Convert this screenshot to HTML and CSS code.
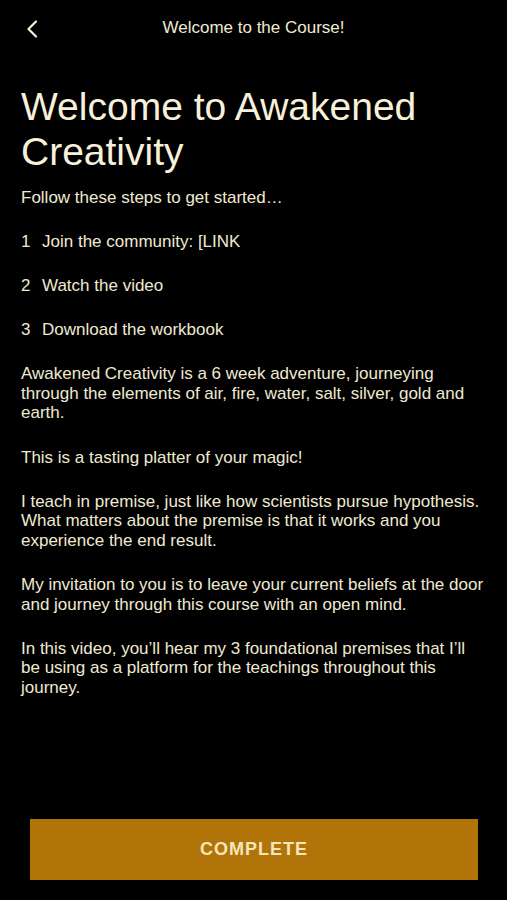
FILE: index.html
```html
<!DOCTYPE html>
<html lang="en">
<head>
<meta charset="utf-8">
<title>Welcome to the Course!</title>
<link rel="stylesheet" href="styles.css">
</head>
<body>
<div class="screen">
  <header class="topbar">
    <button class="back" aria-label="Back">
      <svg width="12" height="18" viewBox="0 0 12 18"><path d="M10 1.5 L2.5 9 L10 16.5" fill="none" stroke="#f4eed6" stroke-width="2.2" stroke-linecap="round" stroke-linejoin="round"/></svg>
    </button>
    <div class="topbar-title">Welcome to the Course!</div>
  </header>
  <main class="content">
    <h1 class="title">Welcome to Awakened Creativity</h1>
    <p class="para">Follow these steps to get started…</p>
    <ol class="steps">
      <li class="step"><span class="num">1</span><span>Join the community: [LINK</span></li>
      <li class="step"><span class="num">2</span><span>Watch the video</span></li>
      <li class="step"><span class="num">3</span><span>Download the workbook</span></li>
    </ol>
    <p class="para">Awakened Creativity is a 6 week adventure, journeying through the elements of air, fire, water, salt, silver, gold and earth.</p>
    <p class="para">This is a tasting platter of your magic!</p>
    <p class="para">I teach in premise, just like how scientists pursue hypothesis. What matters about the premise is that it works and you experience the end result.</p>
    <p class="para">My invitation to you is to leave your current beliefs at the door and journey through this course with an open mind.</p>
    <p class="para">In this video, you’ll hear my 3 foundational premises that I’ll be using as a platform for the teachings throughout this journey.</p>
  </main>
  <footer class="footer">
    <button class="complete">COMPLETE</button>
  </footer>
</div>
</body>
</html>
```
FILE: styles.css
```css
html, body {
  margin: 0;
  padding: 0;
  background: #000;
}
body {
  font-family: "Liberation Sans", Arial, sans-serif;
  color: #efe9d2;
}
.screen {
  height: 900px;
  display: flex;
  flex-direction: column;
}
.topbar {
  height: 56px;
  display: flex;
  align-items: center;
  justify-content: center;
  position: relative;
}
.back {
  position: absolute;
  left: 22px;
  top: 19px;
  padding: 0;
  margin: 0;
  border: 0;
  background: none;
  width: 20px;
  height: 20px;
  display: flex;
  align-items: center;
  justify-content: center;
}
.topbar-title {
  font-size: 17px;
  color: #efe9d2;
}
.content {
  flex: 1;
  padding: 28px 20px 0 21px;
}
.title {
  margin: 0 0 14px;
  font-weight: normal;
  font-size: 39px;
  line-height: 45px;
  color: #f7f1da;
}
.para {
  margin: 0 0 24.6px;
  font-size: 17px;
  line-height: 19.6px;
}
.steps {
  list-style: none;
  margin: 0;
  padding: 0;
}
.step {
  display: flex;
  font-size: 17px;
  line-height: 19.6px;
  margin-bottom: 24.4px;
}
.num {
  width: 21px;
}
.footer {
  padding: 0 29px 20px 30px;
}
.complete {
  width: 100%;
  height: 61px;
  border: 0;
  background: #b07408;
  color: #f6e6bd;
  font-family: "Liberation Sans", Arial, sans-serif;
  font-weight: bold;
  font-size: 18px;
  letter-spacing: 1px;
  display: block;
}
```
